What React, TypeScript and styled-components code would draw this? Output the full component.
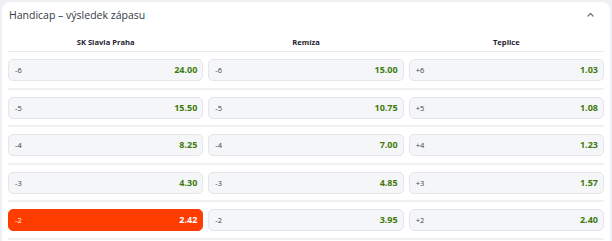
import React from "react";
import styled, { createGlobalStyle } from "styled-components";

const Global = createGlobalStyle`
  html, body { margin: 0; padding: 0; background: #eef0f3; }
  body { font-family: "Open Sans", "Noto Sans", sans-serif; }
`;

const Card = styled.section`
  margin: 2px;
  background: #ffffff;
  border-radius: 8px;
  padding: 0 6px 10px;
  overflow: hidden;
`;

const Header = styled.div`
  height: 26px;
  display: flex;
  align-items: center;
  justify-content: space-between;
  padding-left: 1px;
`;

const Title = styled.span`
  font-size: 10.5px;
  color: #333a44;
`;

const Chevron = styled.svg`
  width: 7px;
  height: 5px;
  margin-right: 10px;
  margin-bottom: 2px;
`;

const Grid = styled.div`
  display: grid;
  grid-template-columns: repeat(3, 1fr);
  column-gap: 5px;
`;

const ColHeaders = styled(Grid)`
  padding: 8px 0 3px;
  border-bottom: 1px solid #e8ebef;
`;

const ColHeader = styled.div`
  text-align: center;
  font-size: 7.6px;
  font-weight: 700;
  line-height: 12px;
  color: #1f2430;
`;

const Row = styled(Grid)`
  padding: 7px 0 6.5px;
  border-bottom: 2px solid #eef0f3;
`;

const OddButton = styled.button<{ $selected?: boolean }>`
  height: 22px;
  display: flex;
  align-items: baseline;
  justify-content: space-between;
  padding: 0 5px 0 6px;
  border-radius: 5px;
  border: 1px solid ${(p) => (p.$selected ? "#ff3d00" : "#e3e6eb")};
  background: ${(p) => (p.$selected ? "#ff3d00" : "#f5f6f8")};
  font-family: inherit;
  cursor: pointer;
`;

const Label = styled.span<{ $selected?: boolean }>`
  font-size: 7.5px;
  line-height: 20px;
  color: ${(p) => (p.$selected ? "#ffffff" : "#3a3f48")};
`;

const Odd = styled.span<{ $selected?: boolean }>`
  font-size: 9px;
  font-weight: 700;
  line-height: 20px;
  color: ${(p) => (p.$selected ? "#ffffff" : "#3f7a0f")};
`;

type Cell = { label: string; odd: string; selected?: boolean };

const rows: Cell[][] = [
  [
    { label: "-6", odd: "24.00" },
    { label: "-6", odd: "15.00" },
    { label: "+6", odd: "1.03" },
  ],
  [
    { label: "-5", odd: "15.50" },
    { label: "-5", odd: "10.75" },
    { label: "+5", odd: "1.08" },
  ],
  [
    { label: "-4", odd: "8.25" },
    { label: "-4", odd: "7.00" },
    { label: "+4", odd: "1.23" },
  ],
  [
    { label: "-3", odd: "4.30" },
    { label: "-3", odd: "4.85" },
    { label: "+3", odd: "1.57" },
  ],
  [
    { label: "-2", odd: "2.42", selected: true },
    { label: "-2", odd: "3.95" },
    { label: "+2", odd: "2.40" },
  ],
];

export default function App() {
  return (
    <>
      <Global />
      <Card>
        <Header>
          <Title>Handicap – výsledek zápasu</Title>
          <Chevron viewBox="0 0 7 5">
            <path d="M1 4 L3.5 1.5 L6 4" fill="none" stroke="#6b7280" strokeWidth="1.2" strokeLinecap="round" strokeLinejoin="round" />
          </Chevron>
        </Header>
        <ColHeaders>
          <ColHeader>SK Slavia Praha</ColHeader>
          <ColHeader>Remíza</ColHeader>
          <ColHeader>Teplice</ColHeader>
        </ColHeaders>
        {rows.map((r, i) => (
          <Row key={i}>
            {r.map((c, j) => (
              <OddButton key={j} $selected={c.selected}>
                <Label $selected={c.selected}>{c.label}</Label>
                <Odd $selected={c.selected}>{c.odd}</Odd>
              </OddButton>
            ))}
          </Row>
        ))}
      </Card>
    </>
  );
}
